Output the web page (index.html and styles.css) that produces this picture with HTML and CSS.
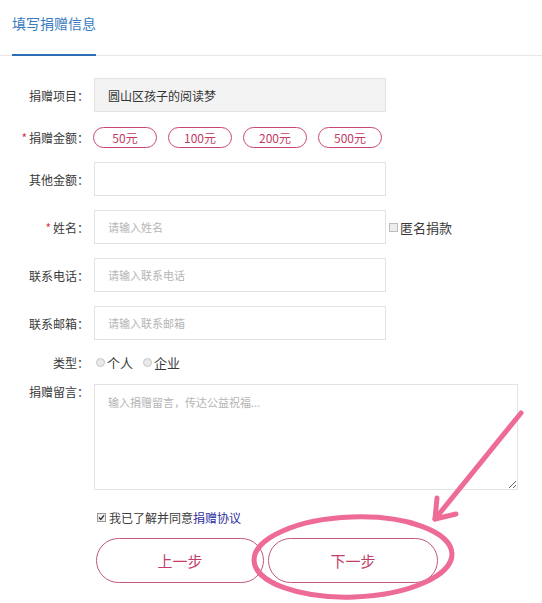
FILE: index.html
```html
<!DOCTYPE html>
<html lang="zh-CN">
<head>
  <meta charset="UTF-8">
  <title>填写捐赠信息</title>
  <link rel="stylesheet" href="styles.css">
</head>
<body>

  <div class="tabs">
    <span class="tab">填写捐赠信息</span>
  </div>

  <form class="form">
    <div class="row">
      <label class="label">捐赠项目：</label>
      <div class="field field-readonly">圆山区孩子的阅读梦</div>
    </div>

    <div class="row row-amount">
      <label class="label"><i class="req">*</i>捐赠金额：</label>
      <div class="amounts">
        <button type="button" class="pill">50元</button>
        <button type="button" class="pill">100元</button>
        <button type="button" class="pill">200元</button>
        <button type="button" class="pill">500元</button>
      </div>
    </div>

    <div class="row">
      <label class="label">其他金额：</label>
      <input class="field" type="text">
    </div>

    <div class="row">
      <label class="label"><i class="req">*</i>姓名：</label>
      <input class="field" type="text" placeholder="请输入姓名">
      <label class="anon"><input class="box" type="checkbox">匿名捐款</label>
    </div>

    <div class="row">
      <label class="label">联系电话：</label>
      <input class="field" type="text" placeholder="请输入联系电话">
    </div>

    <div class="row">
      <label class="label">联系邮箱：</label>
      <input class="field" type="text" placeholder="请输入联系邮箱">
    </div>

    <div class="row row-type">
      <label class="label">类型：</label>
      <label class="opt"><input class="dot" type="radio" name="type">个人</label>
      <label class="opt"><input class="dot" type="radio" name="type">企业</label>
    </div>

    <div class="row row-msg">
      <label class="label">捐赠留言：</label>
      <textarea class="msg" placeholder="输入捐赠留言，传达公益祝福..."></textarea>
    </div>

    <div class="agree">
      <span class="tick">
        <svg width="7" height="7" viewBox="0 0 7 7"><path d="M1 3.6 L2.8 5.4 L6 1.4" fill="none" stroke="#333" stroke-width="1.4"/></svg>
      </span>
      我已了解并同意<a href="#">捐赠协议</a>
    </div>

    <div class="actions">
      <button type="button" class="step">上一步</button>
      <button type="button" class="step step-next">下一步</button>
    </div>
  </form>

  <!-- 标注：箭头和圈 -->
  <svg class="mark" width="542" height="603" viewBox="0 0 542 603">
    <g fill="none" stroke="#ee6b96" stroke-width="5" stroke-linecap="round" stroke-linejoin="round">
      <ellipse cx="353" cy="557" rx="99" ry="40" transform="rotate(-2 353 557)"/>
      <path d="M521 413 L435 519"/>
      <path d="M437 498 L435 519 L456 514"/>
    </g>
  </svg>

</body>
</html>
```

FILE: styles.css
```css
* { box-sizing: border-box; }
body {
  margin: 0;
  font-family: "Noto Sans CJK SC", "Noto Sans", sans-serif;
  font-size: 13px;
  color: #3a3a3a;
  background: #fff;
  position: relative;
  width: 542px;
  height: 603px;
  overflow: hidden;
}

.tabs {
  border-bottom: 1px solid #e8e8e8;
  padding-left: 12px;
  height: 56px;
}

.tab {
  display: inline-block;
  padding-top: 13px;
  height: 56px;
  font-size: 14px;
  line-height: 20px;
  color: #3a7cc0;
  border-bottom: 2px solid #2d6db5;
}

.form {
  padding-top: 22px;
}

.row {
  display: flex;
  align-items: center;
  margin-bottom: 14px;
}

.label {
  width: 93px;
  flex-shrink: 0;
  text-align: right;
  padding-right: 4px;
  font-size: 12px;
}

.req {
  font-style: normal;
  color: #d0375f;
  margin-right: 2px;
}

.field {
  width: 292px;
  height: 34px;
  margin-left: 1px;
  border: 1px solid #e3e3e3;
  padding: 0 13px;
  font-family: inherit;
  font-size: 11px;
  color: #333;
  outline: none;
}

.field::placeholder,
.msg::placeholder {
  color: #b5b5b5;
}

.field-readonly {
  display: flex;
  align-items: center;
  background: #f3f3f3;
  font-size: 12px;
  margin-bottom: 1px;
}

.amounts {
  display: flex;
  gap: 11px;
}

.pill {
  width: 64px;
  height: 21px;
  border: 1px solid #c9486f;
  border-radius: 11px;
  background: #fff;
  color: #c23b63;
  font-family: inherit;
  font-size: 12px;
  line-height: 19px;
  padding: 0;
}

.anon {
  display: flex;
  align-items: center;
  margin-left: 3px;
  font-size: 13px;
}

.box {
  appearance: none;
  width: 9px;
  height: 9px;
  margin: 0 2px 0 0;
  border: 1px solid #bcbcbc;
  background: #ececec;
}

.row-type {
  height: 20px;
  margin-top: -2px;
  margin-bottom: 12px;
}

.opt {
  display: flex;
  align-items: center;
  margin-left: 3px;
  margin-right: 7px;
  font-size: 13px;
}

.dot {
  appearance: none;
  width: 9px;
  height: 9px;
  margin: 0 2px 0 0;
  border-radius: 50%;
  border: 1px solid #c6c6c6;
  background: #e9e9e9;
}

.row-msg {
  align-items: flex-start;
  margin-bottom: 0;
}

.row-msg .label {
  line-height: 16px;
}

.msg {
  width: 424px;
  height: 106px;
  margin-left: 1px;
  border: 1px solid #e3e3e3;
  padding: 9px 13px;
  font-family: inherit;
  font-size: 11px;
  resize: vertical;
  outline: none;
}

.agree {
  display: flex;
  align-items: center;
  margin: 18px 0 0 97px;
  height: 18px;
  font-size: 12px;
}

.tick {
  display: inline-flex;
  align-items: center;
  justify-content: center;
  width: 9px;
  height: 9px;
  margin-right: 3px;
  border: 1px solid #999;
  background: #eee;
}

.agree a {
  color: #2e2f9e;
  text-decoration: none;
}

.actions {
  display: flex;
  gap: 4px;
  margin: 12px 0 0 96px;
}

.step {
  width: 168px;
  height: 45px;
  border: 1px solid #c4587d;
  border-radius: 23px;
  background: #fff;
  color: #c23d67;
  font-family: inherit;
  font-size: 15px;
  padding: 0;
}

.step-next {
  width: 170px;
}

.mark {
  position: absolute;
  top: 0;
  left: 0;
  pointer-events: none;
}
```
